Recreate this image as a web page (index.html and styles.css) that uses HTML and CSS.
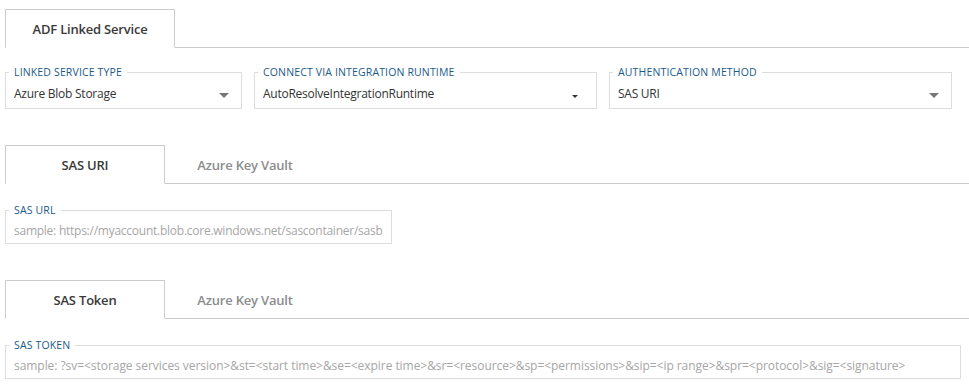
FILE: index.html
```html
<!DOCTYPE html>
<html lang="en">
<head>
    <meta charset="UTF-8">
    <meta name="viewport" content="width=device-width, initial-scale=1.0">
    <title>ADF Linked Service</title>
    <link rel="stylesheet" href="styles.css">
</head>
<body>
    <div class="page">
        <div class="tab-bar top-tabs">
            <div class="tab active wide">ADF Linked Service</div>
        </div>

        <div class="field-row">
            <fieldset class="field">
                <legend>Linked service type</legend>
                <div class="value">Azure Blob Storage</div>
                <span class="caret"></span>
            </fieldset>
            <fieldset class="field">
                <legend>Connect via integration runtime</legend>
                <div class="value">AutoResolveIntegrationRuntime</div>
                <span class="caret small"></span>
            </fieldset>
            <fieldset class="field">
                <legend>Authentication method</legend>
                <div class="value">SAS URI</div>
                <span class="caret"></span>
            </fieldset>
        </div>

        <section class="block">
            <div class="tab-bar">
                <div class="tab active">SAS URI</div>
                <div class="tab">Azure Key Vault</div>
            </div>
            <fieldset class="field url-field">
                <legend>SAS URL</legend>
                <div class="value placeholder">sample: https://myaccount.blob.core.windows.net/sascontainer/sasblob.txt</div>
            </fieldset>
        </section>

        <section class="block">
            <div class="tab-bar">
                <div class="tab active">SAS Token</div>
                <div class="tab">Azure Key Vault</div>
            </div>
            <fieldset class="field token-field">
                <legend>SAS Token</legend>
                <div class="value placeholder">sample: ?sv=&lt;storage services version&gt;&amp;st=&lt;start time&gt;&amp;se=&lt;expire time&gt;&amp;sr=&lt;resource&gt;&amp;sp=&lt;permissions&gt;&amp;sip=&lt;ip range&gt;&amp;spr=&lt;protocol&gt;&amp;sig=&lt;signature&gt;</div>
            </fieldset>
        </section>
    </div>
</body>
</html>
```

FILE: styles.css
```css
* {
    margin: 0;
    padding: 0;
    box-sizing: border-box;
}

body {
    font-family: "Open Sans", "Noto Sans", sans-serif;
    color: #333;
    background: #fff;
}

.page {
    padding: 9px 0 0 5px;
}

/* Tabs */
.tab-bar {
    display: flex;
    border-bottom: 1px solid #ccc;
    height: 39px;
}

.tab {
    width: 160px;
    height: 39px;
    display: flex;
    align-items: center;
    justify-content: center;
    font-size: 13px;
    font-weight: 600;
    color: #8c8c8c;
    letter-spacing: -0.2px;
}

.tab.wide {
    width: 170px;
}

.tab.active {
    color: #3a3a3a;
    background: #fff;
    border: 1px solid #ccc;
    border-bottom: 1px solid #fff;
    padding-top: 1px;
}

/* Fields */
.field-row {
    display: grid;
    grid-template-columns: 237px 343px 343px;
    gap: 0 12px;
    margin-top: 18px;
}

.field {
    position: relative;
    border: 1px solid #ddd;
    height: 43px;
    padding: 0 8px;
    min-width: 0;
}

.field legend {
    font-size: 10.5px;
    text-transform: uppercase;
    color: #1b5a8a;
    padding: 0 5px;
    margin-left: -5px;
    line-height: 12px;
    letter-spacing: 0.15px;
}

.value {
    font-size: 12px;
    line-height: 20px;
    padding-top: 6px;
    white-space: nowrap;
    overflow: hidden;
    letter-spacing: -0.25px;
}

.placeholder {
    color: #a6a6a6;
}

.caret {
    position: absolute;
    right: 12px;
    top: 15px;
    width: 0;
    height: 0;
    border-left: 5px solid transparent;
    border-right: 5px solid transparent;
    border-top: 5px solid #777;
}

.caret.small {
    right: 18px;
    border-left-width: 3px;
    border-right-width: 3px;
    border-top: 3px solid #333;
    top: 17px;
}

.block {
    margin-top: 36px;
}

.block .field {
    margin-top: 20px;
    height: 40px;
}

.block .value {
    padding-top: 5px;
}

.url-field {
    width: 387px;
}

.token-field {
    width: 956px;
}

.token-field .value {
    letter-spacing: -0.05px;
}
```
